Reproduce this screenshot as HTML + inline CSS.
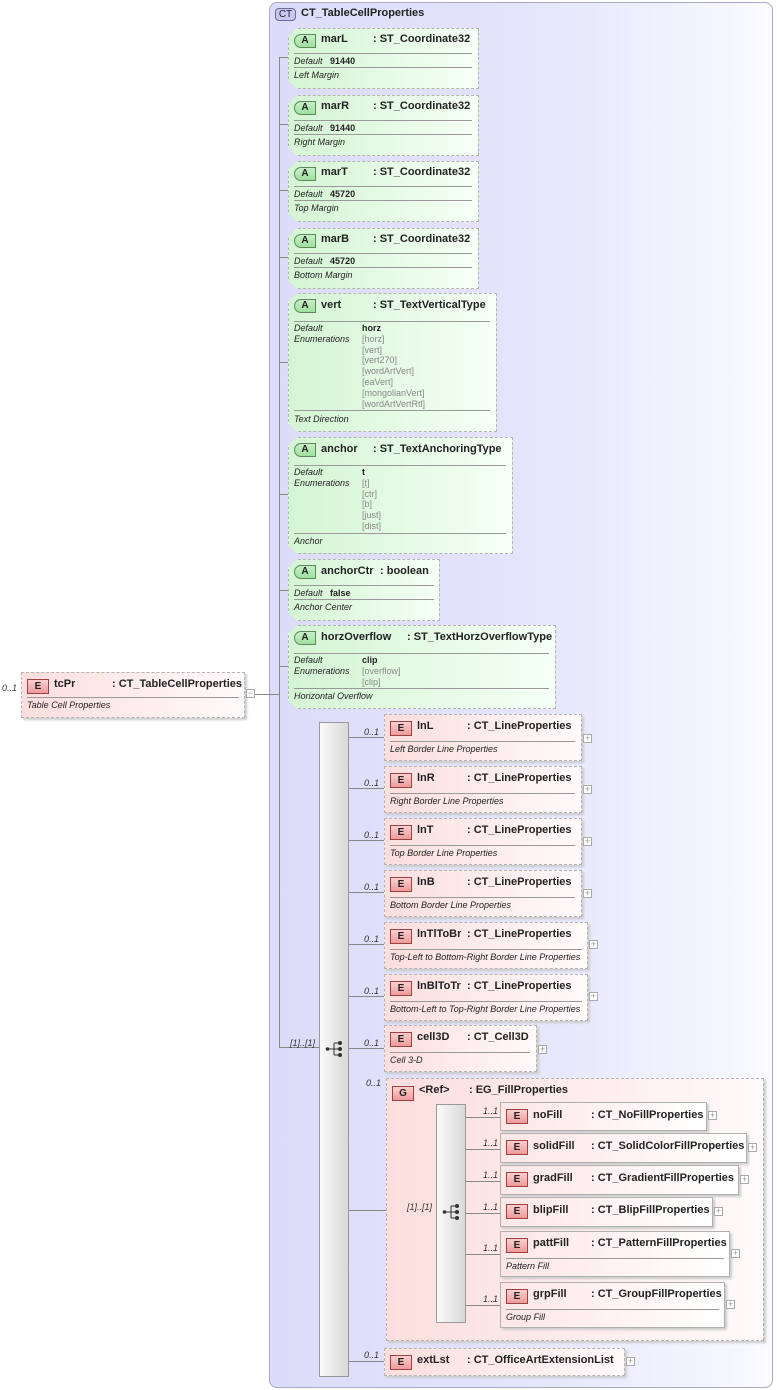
<!DOCTYPE html>
<html><head><meta charset="utf-8"><style>
*{margin:0;padding:0;box-sizing:border-box}
body{width:777px;height:1390px;background:#fff;position:relative;overflow:hidden;font-family:"Liberation Sans",Arial,sans-serif;color:#222}
.p{position:absolute}
.ct{left:269px;top:2px;width:504px;height:1386px;border:1px solid #a9a9c0;border-radius:8px;background:linear-gradient(to right,#dcdcfa 0%,#e4e4fc 50%,#fafaff 100%)}
.a{position:absolute;border:1px dashed #b4b4b4;background:linear-gradient(to right,#d4f5d4,#f6fff6);clip-path:polygon(9px 0,100% 0,100% 100%,9px 100%,0 calc(100% - 9px),0 9px);box-shadow:2px 2px 2px #ccc}
.e{position:absolute;border:1px dashed #b4b4b4;background:linear-gradient(to right,#fcdede,#fffafa);box-shadow:2px 2px 2px #ccc}
.es{position:absolute;border:1px solid #b0b0b0;background:linear-gradient(to right,#fde6e6,#ffffff);box-shadow:2px 2px 2px #ccc}
.bA{position:absolute;left:5px;top:5px;width:22px;height:14px;border:1px solid #5a8a5a;border-radius:7px 0 0 7px;background:linear-gradient(#c8f0c8,#9ee09e);font:bold 10px "Liberation Sans",sans-serif;text-align:center;line-height:12px}
.bE{position:absolute;left:5px;top:6px;width:22px;height:15px;border:1px solid #a04040;background:linear-gradient(#fbd0d0,#ee9a9a);font:bold 10px "Liberation Sans",sans-serif;text-align:center;line-height:13px}
.n{position:absolute;font:bold 11px "Liberation Sans",sans-serif;white-space:nowrap}
.s{position:absolute;font:9px "Liberation Sans",sans-serif;white-space:nowrap}
.i{font-style:italic}
.g{color:#888}
.hl{position:absolute;height:1px;background:#999}
.ln{position:absolute;background:#888}
.seq{position:absolute;border:1px solid #999;background:linear-gradient(to right,#fafafa,#d8d8d8)}
.pl{position:absolute;width:9px;height:9px;border:1px solid #aaa;background:#fff;font:9px/7px "Liberation Sans",sans-serif;text-align:center;color:#999}
.m{position:absolute;font:italic 9px "Liberation Sans",sans-serif;color:#333}
</style></head><body>

<div class="p ct"></div>
<div class="p" style="left:275px;top:8px;width:21px;height:13px;border:1px solid #6a6aa0;border-radius:4px;background:#c8c8f0;font:10px/11px 'Liberation Sans';text-align:center">CT</div>
<div class="n" style="left:301px;top:7px">CT_TableCellProperties</div>

<!-- main vertical connector -->
<div class="ln" style="left:279px;top:57px;width:1px;height:991px"></div>
<div class="ln" style="left:279px;top:57px;width:9px;height:1px"></div>
<div class="ln" style="left:279px;top:124px;width:9px;height:1px"></div>
<div class="ln" style="left:279px;top:190px;width:9px;height:1px"></div>
<div class="ln" style="left:279px;top:257px;width:9px;height:1px"></div>
<div class="ln" style="left:279px;top:362px;width:9px;height:1px"></div>
<div class="ln" style="left:279px;top:494px;width:9px;height:1px"></div>
<div class="ln" style="left:279px;top:590px;width:9px;height:1px"></div>
<div class="ln" style="left:279px;top:666px;width:9px;height:1px"></div>
<div class="ln" style="left:255px;top:694px;width:24px;height:1px"></div>
<div class="ln" style="left:279px;top:1047px;width:40px;height:1px"></div>
<div class="m" style="left:290px;top:1038px">[1]..[1]</div>

<!-- tcPr -->
<div class="m" style="left:2px;top:683px">0..1</div>
<div class="e" style="left:21px;top:672px;width:224px;height:46px">
<div class="bE">E</div><div class="n" style="left:32px;top:5px">tcPr</div><div class="n" style="left:90px;top:5px">: CT_TableCellProperties</div>
<div class="hl" style="left:5px;top:24px;width:212px"></div>
<div class="s i" style="left:5px;top:27px">Table Cell Properties</div></div>
<div class="pl" style="left:246px;top:689px">−</div>

<!-- attributes -->
<div class="a" style="left:288px;top:28px;width:191px;height:61px"><div class="bA">A</div><div class="n" style="left:32px;top:4px">marL</div><div class="n" style="left:84px;top:4px">: ST_Coordinate32</div><div class="hl" style="left:5px;top:24px;width:178px"></div><div class="s" style="left:5px;top:27px"><span class="i">Default</span>&nbsp;&nbsp;&nbsp;<b>91440</b></div><div class="hl" style="left:5px;top:38px;width:178px"></div><div class="s i" style="left:5px;top:41px">Left Margin</div></div>
<div class="a" style="left:288px;top:95px;width:191px;height:61px"><div class="bA">A</div><div class="n" style="left:32px;top:4px">marR</div><div class="n" style="left:84px;top:4px">: ST_Coordinate32</div><div class="hl" style="left:5px;top:24px;width:178px"></div><div class="s" style="left:5px;top:27px"><span class="i">Default</span>&nbsp;&nbsp;&nbsp;<b>91440</b></div><div class="hl" style="left:5px;top:38px;width:178px"></div><div class="s i" style="left:5px;top:41px">Right Margin</div></div>
<div class="a" style="left:288px;top:161px;width:191px;height:61px"><div class="bA">A</div><div class="n" style="left:32px;top:4px">marT</div><div class="n" style="left:84px;top:4px">: ST_Coordinate32</div><div class="hl" style="left:5px;top:24px;width:178px"></div><div class="s" style="left:5px;top:27px"><span class="i">Default</span>&nbsp;&nbsp;&nbsp;<b>45720</b></div><div class="hl" style="left:5px;top:38px;width:178px"></div><div class="s i" style="left:5px;top:41px">Top Margin</div></div>
<div class="a" style="left:288px;top:228px;width:191px;height:61px"><div class="bA">A</div><div class="n" style="left:32px;top:4px">marB</div><div class="n" style="left:84px;top:4px">: ST_Coordinate32</div><div class="hl" style="left:5px;top:24px;width:178px"></div><div class="s" style="left:5px;top:27px"><span class="i">Default</span>&nbsp;&nbsp;&nbsp;<b>45720</b></div><div class="hl" style="left:5px;top:38px;width:178px"></div><div class="s i" style="left:5px;top:41px">Bottom Margin</div></div>

<div class="a" style="left:288px;top:293px;width:209px;height:139px"><div class="bA">A</div><div class="n" style="left:32px;top:5px">vert</div><div class="n" style="left:84px;top:5px">: ST_TextVerticalType</div><div class="hl" style="left:5px;top:27px;width:196px"></div>
<div class="s i" style="left:5px;top:29px;line-height:11px">Default<br>Enumerations</div>
<div class="s" style="left:73px;top:29px;line-height:10.8px"><b>horz</b><br><span class="g">[horz]<br>[vert]<br>[vert270]<br>[wordArtVert]<br>[eaVert]<br>[mongolianVert]<br>[wordArtVertRtl]</span></div>
<div class="hl" style="left:5px;top:116px;width:196px"></div><div class="s i" style="left:5px;top:120px">Text Direction</div></div>

<div class="a" style="left:288px;top:437px;width:225px;height:117px"><div class="bA">A</div><div class="n" style="left:32px;top:5px">anchor</div><div class="n" style="left:84px;top:5px">: ST_TextAnchoringType</div><div class="hl" style="left:5px;top:27px;width:212px"></div>
<div class="s i" style="left:5px;top:29px;line-height:11px">Default<br>Enumerations</div>
<div class="s" style="left:73px;top:29px;line-height:10.8px"><b>t</b><br><span class="g">[t]<br>[ctr]<br>[b]<br>[just]<br>[dist]</span></div>
<div class="hl" style="left:5px;top:95px;width:212px"></div><div class="s i" style="left:5px;top:98px">Anchor</div></div>

<div class="a" style="left:288px;top:559px;width:152px;height:62px"><div class="bA">A</div><div class="n" style="left:32px;top:5px">anchorCtr</div><div class="n" style="left:91px;top:5px">: boolean</div><div class="hl" style="left:5px;top:25px;width:140px"></div><div class="s" style="left:5px;top:28px"><span class="i">Default</span>&nbsp;&nbsp;&nbsp;<b>false</b></div><div class="hl" style="left:5px;top:39px;width:140px"></div><div class="s i" style="left:5px;top:42px">Anchor Center</div></div>

<div class="a" style="left:288px;top:625px;width:268px;height:84px"><div class="bA">A</div><div class="n" style="left:32px;top:5px">horzOverflow</div><div class="n" style="left:118px;top:5px">: ST_TextHorzOverflowType</div><div class="hl" style="left:5px;top:27px;width:255px"></div>
<div class="s i" style="left:5px;top:29px;line-height:11px">Default<br>Enumerations</div>
<div class="s" style="left:73px;top:29px;line-height:10.8px"><b>clip</b><br><span class="g">[overflow]<br>[clip]</span></div>
<div class="hl" style="left:5px;top:62px;width:255px"></div><div class="s i" style="left:5px;top:65px">Horizontal Overflow</div></div>

<!-- sequence -->
<div class="seq" style="left:319px;top:722px;width:30px;height:655px"></div>
<svg class="p" style="left:325px;top:1040px" width="20" height="18"><line x1="2" y1="9" x2="9" y2="9" stroke="#333"/><line x1="9" y1="3" x2="9" y2="15" stroke="#333"/><line x1="9" y1="3" x2="15" y2="3" stroke="#333"/><line x1="9" y1="9" x2="15" y2="9" stroke="#333"/><line x1="9" y1="15" x2="15" y2="15" stroke="#333"/><circle cx="2.5" cy="9" r="1.8" fill="#333"/><circle cx="15" cy="3" r="2" fill="#333"/><circle cx="15" cy="9" r="2" fill="#333"/><circle cx="15" cy="15" r="2" fill="#333"/></svg>

<!-- connectors to elements -->
<div class="ln" style="left:349px;top:737px;width:35px;height:1px"></div><div class="m" style="left:364px;top:727px">0..1</div>
<div class="ln" style="left:349px;top:788px;width:35px;height:1px"></div><div class="m" style="left:364px;top:778px">0..1</div>
<div class="ln" style="left:349px;top:840px;width:35px;height:1px"></div><div class="m" style="left:364px;top:830px">0..1</div>
<div class="ln" style="left:349px;top:892px;width:35px;height:1px"></div><div class="m" style="left:364px;top:882px">0..1</div>
<div class="ln" style="left:349px;top:944px;width:35px;height:1px"></div><div class="m" style="left:364px;top:934px">0..1</div>
<div class="ln" style="left:349px;top:996px;width:35px;height:1px"></div><div class="m" style="left:364px;top:986px">0..1</div>
<div class="ln" style="left:349px;top:1048px;width:35px;height:1px"></div><div class="m" style="left:364px;top:1038px">0..1</div>
<div class="ln" style="left:349px;top:1210px;width:37px;height:1px"></div><div class="m" style="left:366px;top:1078px">0..1</div>
<div class="ln" style="left:349px;top:1361px;width:35px;height:1px"></div><div class="m" style="left:364px;top:1350px">0..1</div>

<div class="e" style="left:384px;top:714px;width:198px;height:47px"><div class="bE">E</div><div class="n" style="left:32px;top:5px">lnL</div><div class="n" style="left:82px;top:5px">: CT_LineProperties</div><div class="hl" style="left:5px;top:26px;width:185px"></div><div class="s i" style="left:5px;top:29px">Left Border Line Properties</div></div><div class="pl" style="left:583px;top:734px">+</div>
<div class="e" style="left:384px;top:766px;width:198px;height:47px"><div class="bE">E</div><div class="n" style="left:32px;top:5px">lnR</div><div class="n" style="left:82px;top:5px">: CT_LineProperties</div><div class="hl" style="left:5px;top:26px;width:185px"></div><div class="s i" style="left:5px;top:29px">Right Border Line Properties</div></div><div class="pl" style="left:583px;top:785px">+</div>
<div class="e" style="left:384px;top:818px;width:198px;height:47px"><div class="bE">E</div><div class="n" style="left:32px;top:5px">lnT</div><div class="n" style="left:82px;top:5px">: CT_LineProperties</div><div class="hl" style="left:5px;top:26px;width:185px"></div><div class="s i" style="left:5px;top:29px">Top Border Line Properties</div></div><div class="pl" style="left:583px;top:837px">+</div>
<div class="e" style="left:384px;top:870px;width:198px;height:47px"><div class="bE">E</div><div class="n" style="left:32px;top:5px">lnB</div><div class="n" style="left:82px;top:5px">: CT_LineProperties</div><div class="hl" style="left:5px;top:26px;width:185px"></div><div class="s i" style="left:5px;top:29px">Bottom Border Line Properties</div></div><div class="pl" style="left:583px;top:889px">+</div>
<div class="e" style="left:384px;top:922px;width:204px;height:47px"><div class="bE">E</div><div class="n" style="left:32px;top:5px">lnTlToBr</div><div class="n" style="left:82px;top:5px">: CT_LineProperties</div><div class="hl" style="left:5px;top:26px;width:192px"></div><div class="s i" style="left:5px;top:29px">Top-Left to Bottom-Right Border Line Properties</div></div><div class="pl" style="left:589px;top:940px">+</div>
<div class="e" style="left:384px;top:974px;width:204px;height:47px"><div class="bE">E</div><div class="n" style="left:32px;top:5px">lnBlToTr</div><div class="n" style="left:82px;top:5px">: CT_LineProperties</div><div class="hl" style="left:5px;top:26px;width:192px"></div><div class="s i" style="left:5px;top:29px">Bottom-Left to Top-Right Border Line Properties</div></div><div class="pl" style="left:589px;top:992px">+</div>
<div class="e" style="left:384px;top:1025px;width:153px;height:47px"><div class="bE">E</div><div class="n" style="left:32px;top:5px">cell3D</div><div class="n" style="left:82px;top:5px">: CT_Cell3D</div><div class="hl" style="left:5px;top:26px;width:140px"></div><div class="s i" style="left:5px;top:29px">Cell 3-D</div></div><div class="pl" style="left:538px;top:1045px">+</div>

<!-- group -->
<div class="e" style="left:386px;top:1078px;width:378px;height:263px"><div class="bE" style="top:7px;left:5px">G</div><div class="n" style="left:32px;top:5px">&lt;Ref&gt;</div><div class="n" style="left:82px;top:5px">: EG_FillProperties</div></div>
<div class="seq" style="left:436px;top:1104px;width:30px;height:219px"></div>
<svg class="p" style="left:442px;top:1203px" width="20" height="18"><line x1="2" y1="9" x2="9" y2="9" stroke="#333"/><line x1="9" y1="3" x2="9" y2="15" stroke="#333"/><line x1="9" y1="3" x2="15" y2="3" stroke="#333"/><line x1="9" y1="9" x2="15" y2="9" stroke="#333"/><line x1="9" y1="15" x2="15" y2="15" stroke="#333"/><circle cx="2.5" cy="9" r="1.8" fill="#333"/><circle cx="15" cy="3" r="2" fill="#333"/><circle cx="15" cy="9" r="2" fill="#333"/><circle cx="15" cy="15" r="2" fill="#333"/></svg>
<div class="m" style="left:407px;top:1202px">[1]..[1]</div>

<div class="ln" style="left:466px;top:1117px;width:34px;height:1px"></div><div class="m" style="left:483px;top:1106px">1..1</div>
<div class="ln" style="left:466px;top:1149px;width:34px;height:1px"></div><div class="m" style="left:483px;top:1138px">1..1</div>
<div class="ln" style="left:466px;top:1181px;width:34px;height:1px"></div><div class="m" style="left:483px;top:1170px">1..1</div>
<div class="ln" style="left:466px;top:1213px;width:34px;height:1px"></div><div class="m" style="left:483px;top:1202px">1..1</div>
<div class="ln" style="left:466px;top:1254px;width:34px;height:1px"></div><div class="m" style="left:483px;top:1243px">1..1</div>
<div class="ln" style="left:466px;top:1305px;width:34px;height:1px"></div><div class="m" style="left:483px;top:1294px">1..1</div>

<div class="es" style="left:500px;top:1102px;width:207px;height:29px"><div class="bE">E</div><div class="n" style="left:32px;top:6px">noFill</div><div class="n" style="left:90px;top:6px">: CT_NoFillProperties</div></div><div class="pl" style="left:708px;top:1111px">+</div>
<div class="es" style="left:500px;top:1133px;width:247px;height:30px"><div class="bE">E</div><div class="n" style="left:32px;top:6px">solidFill</div><div class="n" style="left:90px;top:6px">: CT_SolidColorFillProperties</div></div><div class="pl" style="left:748px;top:1143px">+</div>
<div class="es" style="left:500px;top:1165px;width:239px;height:30px"><div class="bE">E</div><div class="n" style="left:32px;top:6px">gradFill</div><div class="n" style="left:90px;top:6px">: CT_GradientFillProperties</div></div><div class="pl" style="left:740px;top:1175px">+</div>
<div class="es" style="left:500px;top:1197px;width:213px;height:30px"><div class="bE">E</div><div class="n" style="left:32px;top:6px">blipFill</div><div class="n" style="left:90px;top:6px">: CT_BlipFillProperties</div></div><div class="pl" style="left:714px;top:1207px">+</div>
<div class="es" style="left:500px;top:1231px;width:230px;height:46px"><div class="bE">E</div><div class="n" style="left:32px;top:5px">pattFill</div><div class="n" style="left:90px;top:5px">: CT_PatternFillProperties</div><div class="hl" style="left:5px;top:26px;width:218px"></div><div class="s i" style="left:5px;top:29px">Pattern Fill</div></div><div class="pl" style="left:731px;top:1249px">+</div>
<div class="es" style="left:500px;top:1282px;width:225px;height:46px"><div class="bE">E</div><div class="n" style="left:32px;top:5px">grpFill</div><div class="n" style="left:90px;top:5px">: CT_GroupFillProperties</div><div class="hl" style="left:5px;top:26px;width:213px"></div><div class="s i" style="left:5px;top:29px">Group Fill</div></div><div class="pl" style="left:726px;top:1300px">+</div>

<div class="e" style="left:384px;top:1348px;width:241px;height:28px"><div class="bE">E</div><div class="n" style="left:32px;top:5px">extLst</div><div class="n" style="left:82px;top:5px">: CT_OfficeArtExtensionList</div></div><div class="pl" style="left:626px;top:1357px">+</div>

</body></html>
